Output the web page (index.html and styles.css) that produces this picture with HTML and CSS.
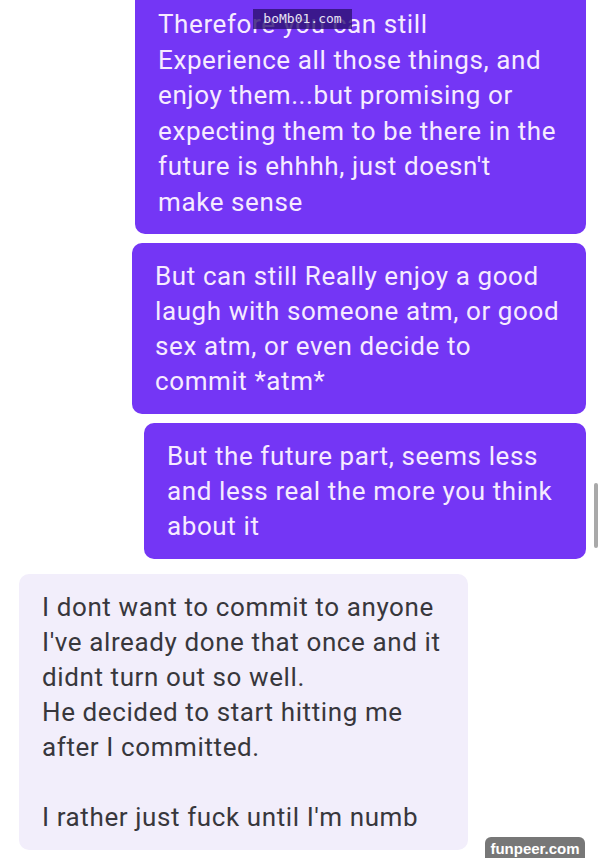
FILE: index.html
```html
<!DOCTYPE html>
<html lang="en">
<head>
    <meta charset="UTF-8">
    <title>Chat</title>
    <link rel="stylesheet" href="styles.css">
</head>
<body>
<div class="chat">
    <div class="msg sent first">
        Therefore you can still<br>
        Experience all those things, and<br>
        enjoy them...but promising or<br>
        expecting them to be there in the<br>
        future is ehhhh, just doesn't<br>
        make sense
    </div>
    <div class="msg sent wide">
        But can still Really enjoy a good<br>
        laugh with someone atm, or good<br>
        sex atm, or even decide to<br>
        commit *atm*
    </div>
    <div class="msg sent narrow">
        But the future part, seems less<br>
        and less real the more you think<br>
        about it
    </div>
    <div class="msg received">
        I dont want to commit to anyone<br>
        I've already done that once and it<br>
        didnt turn out so well.<br>
        He decided to start hitting me<br>
        after I committed.<br>
        <br>
        I rather just fuck until I'm numb
    </div>

    <div class="watermark">boMb01.com</div>
    <div class="scrollbar"></div>
    <div class="badge">funpeer.com</div>
</div>
</body>
</html>
```

FILE: styles.css
```css
html, body {
    margin: 0;
    padding: 0;
    background: #fff;
}

body {
    font-family: Roboto, "Noto Sans", sans-serif;
    font-size: 26px;
    letter-spacing: 0.6px;
    line-height: 35px;
}

.chat {
    position: relative;
    height: 858px;
    overflow: hidden;
    display: flex;
    flex-direction: column;
    padding: 0 19px;
}

.msg {
    box-sizing: border-box;
    padding: 16px 0 15px 23px;
    border-radius: 10px;
    white-space: nowrap;
}

.sent {
    align-self: flex-end;
    background: #7436f5;
    color: #f6ebff;
    margin-bottom: 9px;
}

.sent.first {
    margin-top: -10px;
    padding-top: 17px;
    padding-bottom: 13px;
    width: 451px;
    line-height: 35.6px;
}

.sent.wide {
    width: 454px;
}

.sent.narrow {
    width: 442px;
    margin-bottom: 15px;
}

.received {
    align-self: flex-start;
    width: 449px;
    background: #f2eefb;
    color: #38373c;
}

.watermark {
    position: absolute;
    left: 253px;
    top: 9px;
    width: 99px;
    height: 20px;
    background: rgba(45, 18, 115, 0.8);
    color: #e8e4f4;
    font-family: "DejaVu Sans Mono", monospace;
    font-size: 13px;
    letter-spacing: 0;
    line-height: 20px;
    text-align: center;
}

.scrollbar {
    position: absolute;
    left: 594px;
    top: 483px;
    width: 4px;
    height: 65px;
    border-radius: 2px;
    background: #a9a9a9;
}

.badge {
    position: absolute;
    left: 485px;
    top: 837px;
    width: 100px;
    height: 21px;
    border-radius: 6px 6px 0 0;
    background: #777;
    color: #fff;
    font-family: "Liberation Sans", Arial, sans-serif;
    font-weight: bold;
    font-size: 15px;
    letter-spacing: 0;
    line-height: 23px;
    text-align: center;
}
```
